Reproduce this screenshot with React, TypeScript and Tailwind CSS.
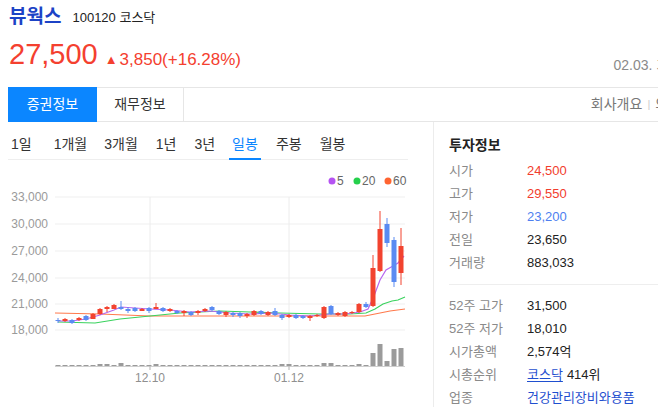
import React from "react";

// chart rows in px (page coords): [bodyTop, bodyBottom, wickTop, wickBottom, up, volumeHeight]
type Candle = [number, number, number, number, boolean, number];

const candles: Candle[] = [
  [320, 321, 318, 323, false, 1],
  [319, 321, 318, 322, true, 1],
  [320, 323, 319, 324, false, 1],
  [318, 320, 317, 321, true, 1],
  [316, 320, 315, 321, false, 1],
  [314, 319, 313, 319, true, 1],
  [309, 314, 308, 315, true, 2],
  [307, 309, 306, 312, true, 2],
  [305, 309, 304, 309, true, 1],
  [307, 309, 301, 310, false, 3],
  [309, 311, 307, 313, false, 1],
  [308, 311, 307, 312, false, 1],
  [309, 311, 308, 311, true, 1],
  [308, 311, 307, 313, false, 1],
  [307, 309, 303, 309, true, 2],
  [308, 311, 307, 312, false, 1],
  [309, 311, 308, 312, true, 1],
  [311, 313, 310, 314, false, 1],
  [311, 313, 310, 316, true, 1],
  [312, 315, 311, 316, false, 1],
  [311, 313, 310, 315, true, 1],
  [309, 311, 308, 312, true, 1],
  [307, 310, 306, 311, false, 1],
  [311, 314, 310, 315, false, 1],
  [312, 315, 311, 317, true, 1],
  [313, 315, 312, 317, false, 1],
  [313, 316, 312, 318, false, 1],
  [314, 316, 313, 318, true, 1],
  [311, 315, 310, 316, true, 1],
  [311, 314, 310, 315, false, 1],
  [312, 315, 311, 316, true, 1],
  [311, 315, 308, 316, false, 1],
  [315, 318, 314, 320, false, 2],
  [315, 317, 314, 318, true, 2],
  [315, 318, 314, 319, false, 1],
  [316, 318, 315, 319, false, 1],
  [316, 318, 315, 321, true, 1],
  [315, 316, 314, 317, true, 1],
  [307, 318, 306, 319, true, 3],
  [306, 314, 305, 315, false, 3],
  [313, 315, 312, 316, true, 1],
  [312, 316, 311, 317, true, 1],
  [312, 313, 311, 314, true, 1],
  [304, 312, 303, 313, true, 2],
  [304, 307, 302, 308, false, 1],
  [268, 306, 255, 307, true, 13],
  [229, 271, 211, 272, true, 22],
  [224, 243, 218, 247, false, 5],
  [240, 282, 237, 287, false, 17],
  [246, 273, 228, 285, true, 18],
];

const ma5 = "58,321 72,321 86,319 100,315 114,310 121,307 135,308 150,309 170,310 190,312 210,311 230,313 250,314 270,313 290,315 310,316 330,314 345,314 360,312 368,309 374,296 380,280 386,270 393,266 398,263 404,256";
const ma20 = "58,322 95,323 120,319 150,316 180,313 220,311 250,312 280,313 320,314 350,314 366,313 375,309 383,304 392,301 398,300 405,297";
const ma60 = "55,313 100,314 150,316 250,316 330,316 365,316 375,314 390,311 405,309";

const yTicks = [
  { y: 197, label: "33,000" },
  { y: 224, label: "30,000" },
  { y: 251, label: "27,000" },
  { y: 278, label: "24,000" },
  { y: 304, label: "21,000" },
  { y: 330, label: "18,000" },
];

const periods = [
  { label: "1일", ml: 3 },
  { label: "1개월", ml: 22 },
  { label: "3개월", ml: 17 },
  { label: "1년", ml: 18 },
  { label: "3년", ml: 18 },
  { label: "일봉", ml: 14, active: true },
  { label: "주봉", ml: 15 },
  { label: "월봉", ml: 18 },
];

const info1 = [
  { k: "시가", v: "24,500", c: "text-[#f23d2d]" },
  { k: "고가", v: "29,550", c: "text-[#f23d2d]" },
  { k: "저가", v: "23,200", c: "text-[#4e7ff0]" },
  { k: "전일", v: "23,650", c: "text-[#222]" },
  { k: "거래량", v: "883,033", c: "text-[#222]" },
];

const info2 = [
  { k: "52주 고가", v: "31,500" },
  { k: "52주 저가", v: "18,010" },
  { k: "시가총액", v: "2,574억" },
];

const Chart = () => (
  <svg width={433} height={242} viewBox="0 165 433 242" className="block">
    {yTicks.map((t) => (
      <g key={t.label}>
        <line x1={55} x2={405} y1={t.y} y2={t.y} stroke="#efefef" />
        <text x={48} y={t.y + 4} textAnchor="end" fontSize={12} fill="#9a9a9a">
          {t.label}
        </text>
      </g>
    ))}
    {[150, 289].map((x) => (
      <line key={x} x1={x} x2={x} y1={197} y2={370} stroke="#ececec" />
    ))}
    <line x1={55} x2={405} y1={366.5} y2={366.5} stroke="#cfcfcf" />
    {[150, 289].map((x) => (
      <line key={x} x1={x} x2={x} y1={366} y2={370} stroke="#bbb" />
    ))}
    <text x={150} y={382} textAnchor="middle" fontSize={12} fill="#8f8f8f">12.10</text>
    <text x={289} y={382} textAnchor="middle" fontSize={12} fill="#8f8f8f">01.12</text>

    {/* legend */}
    <circle cx={332} cy={181} r={3.5} fill="#b553f2" />
    <text x={337} y={185} fontSize={12} fill="#666">5</text>
    <circle cx={357} cy={181} r={3.5} fill="#25d04c" />
    <text x={362} y={185} fontSize={12} fill="#666">20</text>
    <circle cx={388} cy={181} r={3.5} fill="#ff6431" />
    <text x={393} y={185} fontSize={12} fill="#666">60</text>

    {candles.map(([, , , , , vol], i) => (
      <rect key={`v${i}`} x={58 + 7 * i - 2.5} y={366 - vol} width={5} height={vol} fill="#9b9b9b" />
    ))}

    <polyline points={ma60} fill="none" stroke="#ff7a4d" strokeWidth={1.2} />
    <polyline points={ma20} fill="none" stroke="#3ad25e" strokeWidth={1.2} />
    <polyline points={ma5} fill="none" stroke="#b766f0" strokeWidth={1.2} />

    {candles.map(([top, bottom, high, low, up], i) => {
      const x = 58 + 7 * i;
      const color = up ? "#f2432f" : "#5a8bf2";
      return (
        <g key={i}>
          <line x1={x} x2={x} y1={high} y2={low} stroke={color} />
          <rect x={x - 2.5} y={top} width={5} height={Math.max(bottom - top, 1)} fill={color} />
        </g>
      );
    })}
  </svg>
);

export default function App() {
  return (
    <div className="relative h-[407px] w-[658px] overflow-hidden bg-white font-['Liberation_Sans','Noto_Sans_CJK_KR',sans-serif] text-[#222]">
      <div className="h-[87px] pl-[9px]">
        <div className="flex h-[24px] items-center pt-[4px] box-content">
          <span className="text-[19px] font-bold leading-none text-[#1c43c6]">뷰웍스</span>
          <span className="ml-[11px] mt-[3px] text-[13px] leading-none">100120 코스닥</span>
        </div>
        <div className="mt-[9px] flex h-[32px] items-end">
          <span className="text-[29px] leading-none text-[#f4402f]">27,500</span>
          <span className="mb-[1px] ml-[7px] text-[17px] leading-none text-[#f4402f]">
            <span className="mr-[2px] text-[13px] align-[1px]">▲</span>3,850(+16.28%)
          </span>
          <span className="mb-[-3px] ml-auto whitespace-nowrap text-[14px] leading-none text-[#8a8a8a]" style={{ marginRight: -72 }}>
            02.03. 기준(장마감)
          </span>
        </div>
      </div>

      <div className="ml-[8px] flex h-[35px] w-[700px] border-y border-[#e6e6e6]">
        <div className="-my-px flex w-[89px] items-center justify-center bg-[#0b86ff] text-[14px] text-white">증권정보</div>
        <div className="flex w-[87px] items-center justify-center border-r border-[#e6e6e6] text-[14px] text-[#333]">재무정보</div>
        <div className="ml-auto flex items-center pr-[27px] text-[14px] text-[#777]">
          회사개요
          <span className="mx-[5px] text-[11px] text-[#ccc]">|</span>
          의견
        </div>
      </div>

      <div className="flex">
        <div className="w-[433px]">
          <div className="ml-[8px] flex h-[38px] w-[400px] items-end border-b border-[#eeeeee]">
            {periods.map((p) => (
              <div
                key={p.label}
                style={{ marginLeft: p.ml }}
                className={`-mb-px pb-[4px] text-[14px] leading-[20px] ${
                  p.active ? "border-b-2 border-[#0b86ff] px-[3px] text-[#0b86ff]" : "border-b-2 border-transparent text-[#333]"
                }`}
              >
                {p.label}
              </div>
            ))}
          </div>
          <div className="mt-[5px]">
            <Chart />
          </div>
        </div>

        <div className="h-[285px] flex-1 border-l border-[#ececec] pl-[15px] pt-[13px]">
          <div className="text-[14px] font-bold leading-[20px] text-[#222]">투자정보</div>
          <div className="mt-[4px]">
            {info1.map((r) => (
              <div key={r.k} className="flex h-[23px] items-center text-[13px]">
                <span className="w-[78px] text-[#8a8a8a]">{r.k}</span>
                <span className={r.c}>{r.v}</span>
              </div>
            ))}
          </div>
          <div className="mt-[10px] border-t border-[#eeeeee] pt-[9px]">
            {info2.map((r) => (
              <div key={r.k} className="flex h-[23px] items-center text-[13px]">
                <span className="w-[78px] text-[#8a8a8a]">{r.k}</span>
                <span className="text-[#222]">{r.v}</span>
              </div>
            ))}
            <div className="flex h-[23px] items-center text-[13px]">
              <span className="w-[78px] text-[#8a8a8a]">시총순위</span>
              <span className="text-[#1f4fcf] underline underline-offset-2">코스닥</span>
              <span className="ml-[4px] text-[#222]">414위</span>
            </div>
            <div className="flex h-[23px] items-center text-[13px]">
              <span className="w-[78px] text-[#8a8a8a]">업종</span>
              <span className="whitespace-nowrap text-[#1f4fcf]">건강관리장비와용품</span>
            </div>
          </div>
        </div>
      </div>
    </div>
  );
}
